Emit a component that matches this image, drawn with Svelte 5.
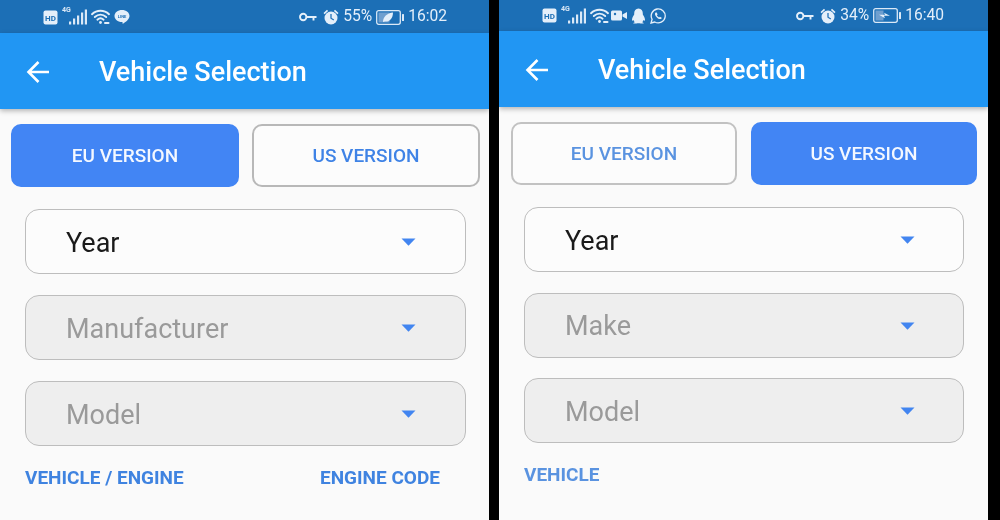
<script>
  const panels = [
    { id: 'a', active: 'eu', fields: ['Year', 'Manufacturer', 'Model'], links: ['VEHICLE / ENGINE', 'ENGINE CODE'], pct: '55%', time: '16:02', extras: ['line'], charge: 'leaf' },
    { id: 'b', active: 'us', fields: ['Year', 'Make', 'Model'], links: ['VEHICLE'], pct: '34%', time: '16:40', extras: ['video', 'qq', 'whatsapp'], charge: 'bolt' }
  ];
</script>

{#snippet hd()}
  <svg class="ic" width="15" height="15" viewBox="0 0 15 15"><rect x="0.5" y="0.5" width="14" height="14" rx="2" fill="#e4effa"/><text x="7.5" y="11" text-anchor="middle" class="hdt">HD</text></svg>
{/snippet}

{#snippet signal()}
  <span class="sig">
    <span class="g4">4G</span>
    <svg width="18" height="16" viewBox="0 0 18 16" fill="#dbe9f7"><rect x="0" y="12.5" width="2.2" height="3"/><rect x="4" y="9.5" width="2.2" height="6"/><rect x="8" y="6.5" width="2.2" height="9"/><rect x="12" y="3.5" width="2.2" height="12"/><rect x="15.8" y="0.5" width="2.2" height="15"/></svg>
  </span>
{/snippet}

{#snippet wifi()}
  <svg class="ic" width="19" height="16" viewBox="0 0 19 16" fill="none" stroke="#e4effa" stroke-width="1.9" stroke-linecap="round"><path d="M1 5.2C5.8 .6 13.2 .6 18 5.2"/><path d="M3.8 8C7.2 4.9 11.8 4.9 15.2 8"/><path d="M6.4 10.7C8.2 9.1 10.8 9.1 12.6 10.7"/><circle cx="9.5" cy="13.5" r="1.4" fill="#e4effa" stroke="none"/><path d="M14 14h3.5" stroke-width="2"/></svg>
{/snippet}

{#snippet extra(kind)}
  {#if kind === 'line'}
    <svg class="ic" width="16" height="16" viewBox="0 0 16 16"><path d="M8 1c4.2 0 7.5 2.6 7.5 6 0 3-3.6 6-7 8 .4-1.2.3-2-.7-2C3.800 13 .5 10.300.5 7 .5 3.600 3.800 1 8 1z" fill="#e4effa"/><text x="8" y="9" text-anchor="middle" class="linet">LINE</text></svg>
  {:else if kind === 'video'}
    <svg class="ic vid" width="16" height="15" viewBox="0 0 16 15" fill="#e4effa"><rect x="0" y="2.5" width="11" height="10" rx="1.500"/><path d="M11.500 6.500 16 4v7l-4.500-2.500z"/><circle cx="4" cy="6" r="1.200" fill="#2272b8"/></svg>
  {:else if kind === 'qq'}
    <svg class="ic" width="15" height="16" viewBox="0 0 15 16" fill="#e4effa"><path d="M7.500.5c2.900 0 4.300 2.200 4.300 4.700v1.300c1 1.500 2.200 3.600 2.200 5.300 0 1-.5 1.200-1.500.3-.2 1-.7 1.600-1.300 2.100 1 .3 1.500.7 1.500 1 0 .4-1.600.5-3 .3-.9-.2-1.500-.3-2.200-.3s-1.300.1-2.200.3c-1.400.2-3 .1-3-.3 0-.3.5-.7 1.500-1-.6-.5-1.100-1.100-1.300-2.100-1 .9-1.500.7-1.500-.3 0-1.700 1.200-3.800 2.200-5.300V5.200C3.200 2.700 4.600.5 7.500.5z"/></svg>
  {:else}
    <svg class="ic" width="16" height="16" viewBox="0 0 16 16" fill="none" stroke="#e4effa" stroke-width="1.300"><path d="M1 15l1.100-3.700A7 7 0 1 1 4.800 14z"/><path d="M5.600 4.600c-1 1-.8 2.400.4 3.900 1.300 1.600 2.800 2.700 4.400 2.600.8-.1 1.300-.7 1.300-1.400l-1.800-1-.8.800c-.8-.3-1.800-1.300-2.200-2.200l.7-.8-.9-1.900z" fill="#e4effa" stroke="none"/></svg>
  {/if}
{/snippet}

{#snippet key()}
  <svg class="ic keyic" width="18" height="10" viewBox="0 0 18 10" fill="none" stroke="#e4effa" stroke-width="1.900"><circle cx="4.200" cy="5" r="3.200"/><path d="M7.500 5H17.500M14.500 5v3.500"/></svg>
{/snippet}

{#snippet alarm()}
  <svg class="ic" width="16" height="16" viewBox="0 0 16 16" fill="#e4effa"><circle cx="8" cy="9" r="6.500"/><path d="M.5 4 4 .8l1.100 1.300L1.600 5.300zM15.500 4 12 .8l-1.100 1.300 3.500 3.200z"/><path d="M8 5v4.200l2.800 1.800" fill="none" stroke="#2272b8" stroke-width="1.300"/></svg>
{/snippet}

{#snippet battery(kind)}
  <svg class="ic" width="28" height="15" viewBox="0 0 28 15"><rect x="0.700" y="0.700" width="23.600" height="13.600" rx="2" fill="none" stroke="#dbe9f7" stroke-width="1.300"/><rect x="2.500" y="2.500" width="{kind === 'leaf' ? 11 : 8}" height="10" fill="#6f9fcf"/><rect x="26" y="4" width="2" height="7" rx="0.500" fill="#dbe9f7"/>
    {#if kind === 'leaf'}
      <path d="M7 12c0-5 4-9 10-9.500C17 9 13 12 9 11.500z" fill="#e4effa"/>
    {:else}
      <path d="M6 6.700h6l-1-2 6 3h-6l1 2.500z" fill="#e4effa"/>
    {/if}
  </svg>
{/snippet}

{#snippet caret()}
  <svg class="caret" width="15" height="8" viewBox="0 0 15 8"><path d="M0.500 0.500h14L7.500 7.800z" fill="#4285f0"/></svg>
{/snippet}

<div class="stage">
  {#each panels as p (p.id)}
    <section class="phone {p.id}">
      <div class="status">
        <div class="group left">
          {@render hd()}
          {@render signal()}
          {@render wifi()}
          {#each p.extras as x}
            {@render extra(x)}
          {/each}
        </div>
        <div class="group right">
          {@render key()}
          {@render alarm()}
          <span class="stxt">{p.pct}</span>
          {@render battery(p.charge)}
          <span class="stxt">{p.time}</span>
        </div>
      </div>
      <header class="bar">
        <svg class="back" width="24" height="22" viewBox="0 0 24 22" fill="none" stroke="#fff" stroke-width="2.600"><path d="M23 11H2.500M12.500 1 2.500 11l10 10"/></svg>
        <h1>Vehicle Selection</h1>
      </header>
      <main class="body">
        <div class="tabs">
          <button class="tab" class:on={p.active === 'eu'}>EU VERSION</button>
          <button class="tab" class:on={p.active === 'us'}>US VERSION</button>
        </div>
        <div class="fields">
          {#each p.fields as f, i}
            <div class="field" class:disabled={i > 0}>
              <span class="label">{f}</span>
              {@render caret()}
            </div>
          {/each}
        </div>
        <div class="links">
          {#each p.links as l}
            <span>{l}</span>
          {/each}
        </div>
      </main>
    </section>
  {/each}
</div>

<style>
  :global(body) { margin: 0; background: #000; }
  .stage {
    width: 1000px; height: 520px; overflow: hidden; background: #000;
    display: flex; gap: 10px;
    font-family: Roboto, "Liberation Sans", sans-serif;
  }
  .phone { width: 489px; height: 520px; background: #fafafa; display: flex; flex-direction: column; flex: none; filter: blur(0.4px); }
  .status { height: 33px; flex: none; background: #1c6fb6; display: flex; justify-content: space-between; align-items: center; padding: 1px 42px 0 43px; box-sizing: border-box; }
  .phone.b .status { height: 31px; padding: 0 44px 0 43px; }
  .group { display: flex; align-items: center; gap: 4px; }
  .ic { display: block; flex: none; }
  .vid { margin-left: -2px; }
  .keyic { margin-right: 2px; }
  .hdt { font: 700 8px Roboto, sans-serif; fill: #1c6fb6; }
  .linet { font: 700 4px Roboto, sans-serif; fill: #1c6fb6; }
  .sig { display: flex; align-items: flex-end; position: relative; padding-left: 7px; }
  .g4 { position: absolute; left: 0; top: -3px; font-size: 7px; font-weight: 700; color: #dbe9f7; }
  .stxt { color: #e4effa; font-size: 15.6px; line-height: 1; }
  .bar { height: 76px; flex: none; background: #2196f3; display: flex; align-items: center; padding: 2px 0 0 26px; box-sizing: border-box; box-shadow: 0 2px 5px rgba(0,0,0,.28); position: relative; }
  .back { margin-right: 49px; flex: none; }
  h1 { margin: 0; color: #fff; font-size: 27px; font-weight: 500; }
  .body { padding: 15px 9px 0 11px; display: flex; flex-direction: column; }
  .phone.b .body { padding: 15px 11px 0 12px; }
  .tabs { display: flex; gap: 13px; }
  .phone.b .tabs { gap: 14px; }
  .tab {
    flex: 1 1 0; height: 63px; border-radius: 10px; border: 2px solid #b8b8b8; background: #fcfcfc;
    color: #3f83e6; font: 500 19px Roboto, sans-serif; padding: 0;
  }
  .phone.b .tab { color: #5a93e0; border-color: #c2c2c2; }
  .phone .tab.on { background: #4285f4; border-color: #4285f4; color: #f4f8ff; }
  .fields { display: flex; flex-direction: column; gap: 21px; margin: 22px 14px 0; }
  .phone.b .fields { gap: 20.5px; margin-left: 13px; margin-right: 13px; }
  .field {
    height: 65px; box-sizing: border-box; border: 1px solid #bdbdbd; border-radius: 14px; background: #fcfcfc;
    display: flex; align-items: center; justify-content: space-between; padding: 0 49px 0 40px;
    font-size: 27px; color: #1a1a1a;
  }
  .label { padding-top: 2px; }
  .phone.b .field { padding-right: 48px; }
  .field.disabled { background: #eeeeee; color: #9a9a9a; }
  .caret { display: block; flex: none; margin-top: 1px; }
  .links { display: flex; justify-content: space-between; margin: 20px 40px 0 14px; font-size: 19px; font-weight: 700; color: #3f83e0; line-height: 24px; }
  .phone.b .links { margin-left: 13px; margin-top: 20px; color: #5a93e0; }
</style>
